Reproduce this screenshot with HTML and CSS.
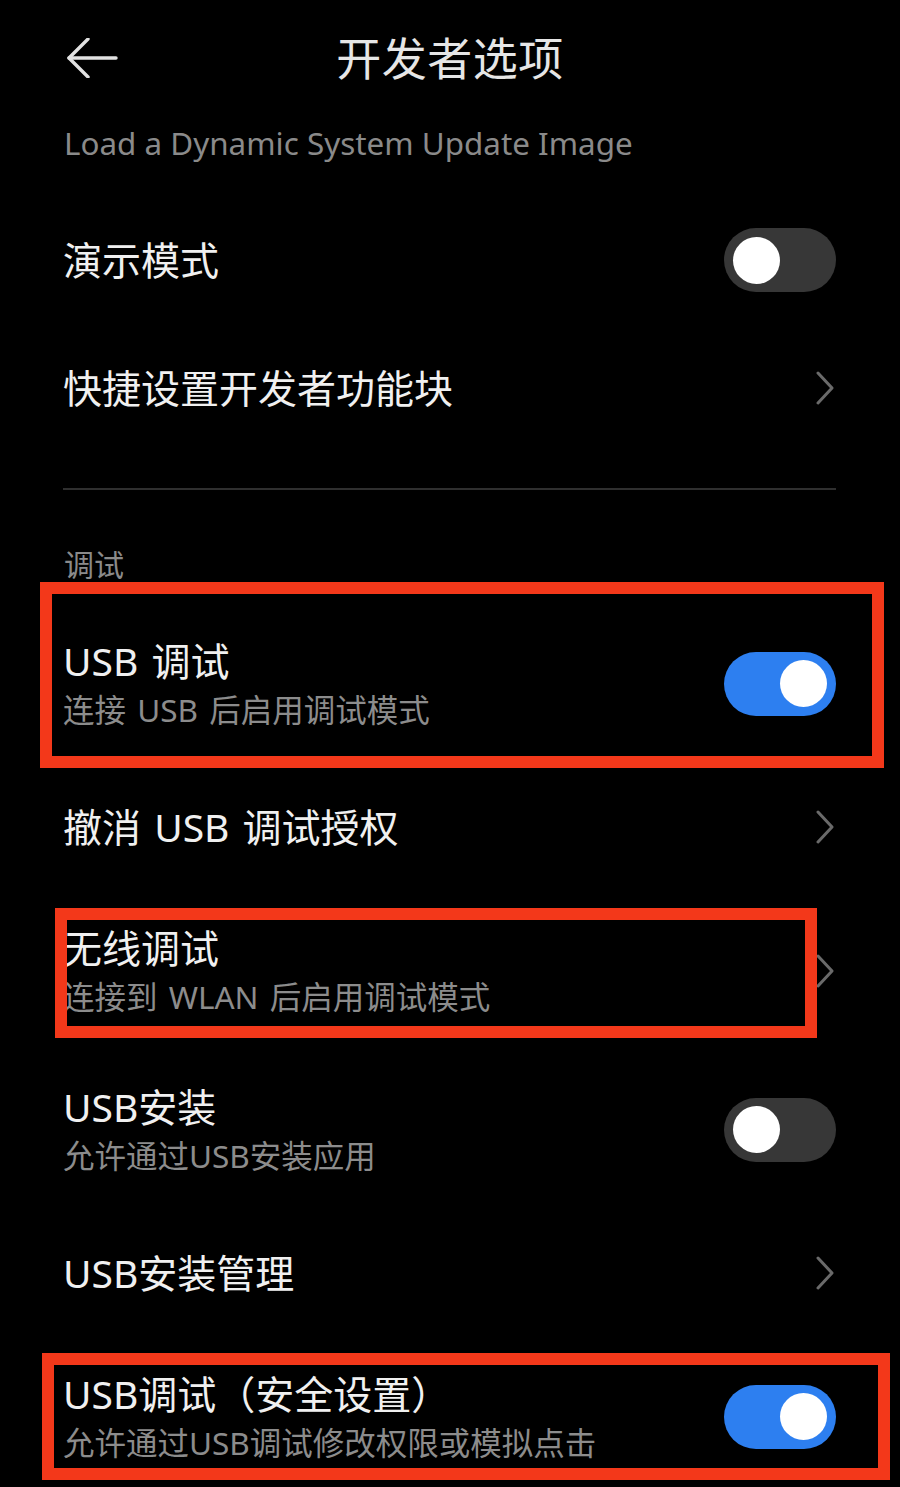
FILE: index.html
```html
<!DOCTYPE html>
<html lang="zh-CN">
<head>
<meta charset="utf-8">
<title>开发者选项</title>
<link rel="stylesheet" href="styles.css">
</head>
<body>
<div class="page">
  <header class="header">
    <svg class="back" width="52" height="40" viewBox="0 0 52 40">
      <line x1="3" y1="20" x2="50" y2="20" />
      <polyline points="22,1 3,20 22,39" />
    </svg>
    <h1 class="title">开发者选项</h1>
    <span></span>
  </header>

  <div class="load">Load a Dynamic System Update Image</div>

  <div class="row single">
    <div class="label">演示模式</div>
    <div class="toggle off"><span class="knob"></span></div>
  </div>

  <div class="row single">
    <div class="label">快捷设置开发者功能块</div>
    <svg class="chev" width="20" height="34" viewBox="0 0 20 34"><polyline points="3,2 17,17 3,32" /></svg>
  </div>

  <div class="divider"></div>

  <div class="section">调试</div>

  <div class="row double first">
    <div class="text">
      <div class="label">USB 调试</div>
      <div class="sub">连接 USB 后启用调试模式</div>
    </div>
    <div class="toggle on"><span class="knob"></span></div>
  </div>

  <div class="row single">
    <div class="label">撤消 USB 调试授权</div>
    <svg class="chev" width="20" height="34" viewBox="0 0 20 34"><polyline points="3,2 17,17 3,32" /></svg>
  </div>

  <div class="row double">
    <div class="text">
      <div class="label">无线调试</div>
      <div class="sub">连接到 WLAN 后启用调试模式</div>
    </div>
    <svg class="chev" width="20" height="34" viewBox="0 0 20 34"><polyline points="3,2 17,17 3,32" /></svg>
  </div>

  <div class="row double">
    <div class="text">
      <div class="label">USB安装</div>
      <div class="sub">允许通过USB安装应用</div>
    </div>
    <div class="toggle off"><span class="knob"></span></div>
  </div>

  <div class="row single">
    <div class="label">USB安装管理</div>
    <svg class="chev" width="20" height="34" viewBox="0 0 20 34"><polyline points="3,2 17,17 3,32" /></svg>
  </div>

  <div class="row double">
    <div class="text">
      <div class="label">USB调试（安全设置）</div>
      <div class="sub">允许通过USB调试修改权限或模拟点击</div>
    </div>
    <div class="toggle on"><span class="knob"></span></div>
  </div>

  <div class="mark mark-1"></div>
  <div class="mark mark-2"></div>
  <div class="mark mark-3"></div>
</div>
</body>
</html>
```

FILE: styles.css
```css
html, body {
  margin: 0;
  padding: 0;
  background: #000;
}

body {
  width: 900px;
  height: 1487px;
  overflow: hidden;
  font-family: "Noto Sans", "Noto Sans CJK SC", sans-serif;
  color: #f0f0f0;
}

.page {
  position: relative;
  width: 900px;
  height: 1487px;
}

.header {
  height: 112px;
  padding-bottom: 4px;
  display: grid;
  grid-template-columns: 1fr auto 1fr;
  align-items: center;
  padding-left: 65px;
  padding-right: 65px;
}

.back {
  display: block;
  margin-left: 1px;
  margin-top: 4px;
}

.back line,
.back polyline {
  fill: none;
  stroke: #e2e2e2;
  stroke-width: 3.4;
  stroke-linecap: round;
  stroke-linejoin: round;
}

.title {
  margin: 0;
  font-family: "Noto Sans CJK SC", sans-serif;
  font-size: 45px;
  font-weight: 400;
  line-height: 1;
  color: #e6e6e6;
  letter-spacing: 0.5px;
}

.load {
  height: 80px;
  line-height: 54px;
  padding-left: 64px;
  font-size: 31.4px;
  color: #8a8a8a;
}

.row {
  display: flex;
  align-items: center;
  justify-content: space-between;
  padding: 0 64px 0 63px;
}

.row.single {
  height: 128px;
}

.row.double {
  height: 159px;
}

.row.first {
  margin-top: 19px;
}

.label {
  font-size: 39px;
  line-height: 52px;
  color: #f0f0f0;
  word-spacing: 3px;
}

.sub {
  font-size: 31.5px;
  line-height: 46px;
  color: #8c8c8c;
  word-spacing: 3px;
}

.divider {
  margin: 36px 64px 0 63px;
  height: 2px;
  background: #2f2f2f;
}

.section {
  margin-top: 55px;
  padding-left: 64px;
  height: 40px;
  line-height: 40px;
  font-size: 30px;
  color: #8a8a8a;
}

.toggle {
  width: 112px;
  height: 64px;
  border-radius: 32px;
  display: flex;
  align-items: center;
  padding: 0 9px;
  box-sizing: border-box;
  flex-shrink: 0;
}

.toggle.off {
  background: #373737;
  justify-content: flex-start;
}

.toggle.on {
  background: #2d7ff0;
  justify-content: flex-end;
}

.knob {
  width: 47px;
  height: 47px;
  border-radius: 50%;
  background: #fff;
}

.chev {
  display: block;
  margin-right: 1px;
  flex-shrink: 0;
}

.chev polyline {
  fill: none;
  stroke: #6a6a6a;
  stroke-width: 3;
  stroke-linecap: round;
  stroke-linejoin: round;
}

.mark {
  position: absolute;
  border: 12px solid #f3381a;
  box-sizing: border-box;
}

.mark-1 {
  left: 40px;
  top: 582px;
  width: 844px;
  height: 186px;
}

.mark-2 {
  left: 55px;
  top: 908px;
  width: 762px;
  height: 130px;
}

.mark-3 {
  left: 42px;
  top: 1353px;
  width: 848px;
  height: 127px;
}
```
